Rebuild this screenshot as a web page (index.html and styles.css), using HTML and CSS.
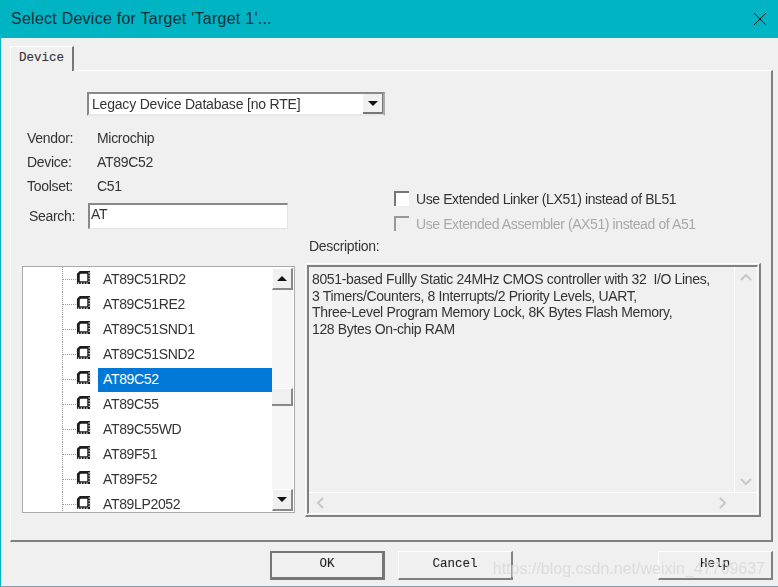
FILE: index.html
```html
<!DOCTYPE html>
<html lang="en">
<head>
  <meta charset="UTF-8" />
  <meta name="viewport" content="width=device-width, initial-scale=1" />
  <title>Select Device</title>
  <link rel="stylesheet" href="styles.css">
</head>
<body>

  <svg class="defs" width="0" height="0" aria-hidden="true">
    <symbol id="chip" viewBox="0 0 16 16">
      <path d="M4 1H15V15H1V4Z" fill="#1c1c1c"/>
      <path d="M5 4H12V12H4V5Z" fill="#fff"/>
      <path d="M2 14h1.4M5 14h1.4M8 14h1.4M11 14h1.4M14 2.5v1.4M14 5.5v1.4M14 8.5v1.4M14 11.5v1.4" stroke="#fff" stroke-width="1.2"/>
    </symbol>
  </svg>

  <div class="window">
    <header class="titlebar">
      <span>Select Device for Target 'Target 1'...</span>
      <svg class="close" width="14" height="14" viewBox="0 0 14 14"><path d="M1 1L13 13M13 1L1 13" stroke="#111" stroke-width="1"/></svg>
    </header>

    <main class="content">
      <div class="tabstrip"><div class="tab">Device</div></div>

      <section class="panel">
        <div class="combo">
          <span class="combo-text">Legacy Device Database [no RTE]</span>
          <span class="combo-btn"><i class="arrow-down"></i></span>
        </div>

        <div class="middle">
          <div class="info">
            <div class="info-row"><span class="info-label">Vendor:</span><span>Microchip</span></div>
            <div class="info-row"><span class="info-label">Device:</span><span>AT89C52</span></div>
            <div class="info-row"><span class="info-label">Toolset:</span><span>C51</span></div>
            <div class="search-row">
              <span class="search-label">Search:</span>
              <div class="search-input">AT</div>
            </div>
          </div>
          <div class="options">
            <label class="check"><i class="box"></i>Use Extended Linker (LX51) instead of BL51</label>
            <label class="check disabled"><i class="box"></i>Use Extended Assembler (AX51) instead of A51</label>
            <div class="desc-label">Description:</div>
          </div>
        </div>

        <div class="lower">
          <div class="device-list">
            <ul class="tree">
              <li class="tree-row"><svg class="chip"><use href="#chip"/></svg><span class="tree-text">AT89C51RD2</span></li>
              <li class="tree-row"><svg class="chip"><use href="#chip"/></svg><span class="tree-text">AT89C51RE2</span></li>
              <li class="tree-row"><svg class="chip"><use href="#chip"/></svg><span class="tree-text">AT89C51SND1</span></li>
              <li class="tree-row"><svg class="chip"><use href="#chip"/></svg><span class="tree-text">AT89C51SND2</span></li>
              <li class="tree-row selected"><svg class="chip"><use href="#chip"/></svg><span class="tree-text">AT89C52</span></li>
              <li class="tree-row"><svg class="chip"><use href="#chip"/></svg><span class="tree-text">AT89C55</span></li>
              <li class="tree-row"><svg class="chip"><use href="#chip"/></svg><span class="tree-text">AT89C55WD</span></li>
              <li class="tree-row"><svg class="chip"><use href="#chip"/></svg><span class="tree-text">AT89F51</span></li>
              <li class="tree-row"><svg class="chip"><use href="#chip"/></svg><span class="tree-text">AT89F52</span></li>
              <li class="tree-row"><svg class="chip"><use href="#chip"/></svg><span class="tree-text">AT89LP2052</span></li>
            </ul>
            <div class="scrollbar">
              <span class="scroll-btn"><i class="arrow-up"></i></span>
              <div class="scroll-track"><div class="scroll-thumb"></div></div>
              <span class="scroll-btn"><i class="arrow-down"></i></span>
            </div>
          </div>

          <div class="description">
            <div class="desc-inner">
              <div class="desc-main">
                <p class="desc-text">8051-based Fullly Static 24MHz CMOS controller with 32  I/O Lines,<br>3 Timers/Counters, 8 Interrupts/2 Priority Levels, UART,<br>Three-Level Program Memory Lock, 8K Bytes Flash Memory,<br>128 Bytes On-chip RAM</p>
                <div class="desc-vscroll">
                  <svg width="12" height="8" viewBox="0 0 12 8"><path d="M1 7L6 2L11 7" fill="none" stroke="#c8c8c8" stroke-width="2"/></svg>
                  <svg width="12" height="8" viewBox="0 0 12 8"><path d="M1 1L6 6L11 1" fill="none" stroke="#c8c8c8" stroke-width="2"/></svg>
                </div>
              </div>
              <div class="desc-hscroll">
                <svg width="8" height="12" viewBox="0 0 8 12"><path d="M7 1L2 6L7 11" fill="none" stroke="#c8c8c8" stroke-width="2"/></svg>
                <svg width="8" height="12" viewBox="0 0 8 12"><path d="M1 1L6 6L1 11" fill="none" stroke="#c8c8c8" stroke-width="2"/></svg>
              </div>
            </div>
          </div>
        </div>
      </section>

      <footer class="buttons">
        <button class="btn default" type="button">OK</button>
        <button class="btn" type="button">Cancel</button>
        <button class="btn help" type="button">Help</button>
      </footer>
    </main>

    <div class="watermark">https://blog.csdn.net/weixin_47709637</div>
  </div>

</body>
</html>
```

FILE: styles.css
```css
/* Old Win32 dialog look */
* {
  box-sizing: border-box;
}

html, body {
  margin: 0;
  height: 100%;
}

body {
  background: #f0f0f0;
  font-family: 'Liberation Sans', Arial, sans-serif;
  font-size: 14px;
  letter-spacing: -0.3px;
  color: #333;
  overflow: hidden;
}

.defs {
  position: absolute;
}

.window {
  position: relative;
  width: 778px;
  height: 587px;
  display: flex;
  flex-direction: column;
  border-left: 1px solid #00b4c4;
  border-bottom: 1px solid #8a9aa0;
  filter: blur(0.35px);
}

.titlebar {
  height: 38px;
  flex: none;
  margin-left: -1px;
  padding: 0 11px 0 11px;
  background: #00b4c4;
  color: #10303a;
  font-size: 16px;
  letter-spacing: 0.25px;
  display: flex;
  align-items: center;
  justify-content: space-between;
}

.content {
  flex: 1;
  padding: 8px 5px 0 9px;
  display: flex;
  flex-direction: column;
}

/* tab */
.tabstrip {
  height: 24px;
  flex: none;
  display: flex;
}

.tab {
  width: 64px;
  height: 25px;
  padding: 4px 0 0 8px;
  font-family: 'Liberation Mono', monospace;
  font-size: 12.5px;
  letter-spacing: 0;
  -webkit-text-stroke: 0.1px #333;
  color: #333;
  background: #f0f0f0;
  border-top: 1px solid #fff;
  border-left: 1px solid #fff;
  border-right: 2px solid #777;
  position: relative;
  z-index: 1;
}

.panel {
  height: 472px;
  flex: none;
  padding-top: 21px;
  border-top: 1px solid #fff;
  border-left: 1px solid #fff;
  border-right: 2px solid #808080;
  border-bottom: 2px solid #808080;
}

/* combo */
.combo {
  width: 298px;
  height: 24px;
  margin-left: 76px;
  display: flex;
  align-items: center;
  justify-content: space-between;
  background: #fff;
  border: 2px solid #888;
  border-right-color: #aaa;
  border-bottom-color: #e8e8e8;
}

.combo-text {
  padding-left: 3px;
  letter-spacing: -0.2px;
}

.combo-btn {
  width: 20px;
  height: 20px;
  display: flex;
  align-items: center;
  justify-content: center;
  background: #f0f0f0;
  border-right: 1px solid #777;
  border-bottom: 2px solid #777;
}

.arrow-down, .arrow-up {
  display: block;
  width: 0;
  height: 0;
  border-left: 5px solid transparent;
  border-right: 5px solid transparent;
}

.arrow-down {
  border-top: 5px solid #111;
}

.arrow-up {
  border-bottom: 5px solid #111;
}

/* middle part */
.middle {
  height: 148px;
  display: flex;
}

.info {
  width: 277px;
  padding: 10px 0 0 16px;
  flex: none;
}

.info-row {
  height: 24px;
  display: flex;
  align-items: center;
}

.info-label {
  width: 70px;
}

.search-row {
  height: 26px;
  margin-top: 5px;
  display: flex;
  align-items: center;
}

.search-label {
  width: 61px;
  padding-left: 2px;
}

.search-input {
  width: 200px;
  height: 26px;
  padding-left: 1px;
  line-height: 18px;
  background: #fff;
  border-top: 2px solid #888;
  border-left: 2px solid #888;
  border-right: 1px solid #e4e4e4;
  border-bottom: 1px solid #e4e4e4;
}

.options {
  padding: 70px 0 0 106px;
  flex: 1;
}

.check {
  height: 25px;
  display: flex;
  align-items: center;
  gap: 7px;
  letter-spacing: -0.4px;
  color: #333;
}

.box {
  width: 15px;
  height: 15px;
  background: #fff;
  border-top: 2px solid #777;
  border-left: 2px solid #777;
}

.check.disabled {
  color: #a8a8a8;
}

.check.disabled .box {
  background: #f0f0f0;
  border-color: #999;
}

.desc-label {
  margin: 2px 0 0 -85px;
}

/* lists */
.lower {
  display: flex;
  align-items: flex-start;
  gap: 10px;
  padding-left: 11px;
}

.device-list {
  width: 273px;
  height: 247px;
  margin-top: 2px;
  display: flex;
  background: #fff;
  border: 1px solid #aaa;
}

.tree {
  flex: 1;
  margin: 0;
  padding: 0;
  list-style: none;
  overflow: hidden;
  background: #fff;
}

.tree-row {
  position: relative;
  height: 25px;
  padding-left: 53px;
  display: flex;
  align-items: center;
  letter-spacing: -0.35px;
}

.tree-row::before {
  content: "";
  position: absolute;
  left: 39px;
  top: 0;
  bottom: 0;
  border-left: 1px dotted #999;
}

.tree-row::after {
  content: "";
  position: absolute;
  left: 40px;
  top: 12px;
  width: 13px;
  border-top: 1px dotted #999;
}

.chip {
  width: 15px;
  height: 15px;
  margin-top: -5px;
  flex: none;
}

.tree-text {
  flex: 1;
  height: 24px;
  margin: 1px 0 0 7px;
  padding-left: 5px;
  line-height: 22px;
  color: #333;
}

.selected .tree-text {
  background: #0078d7;
  color: #fff;
}

.scrollbar {
  width: 21px;
  flex: none;
  padding: 1px 0;
  display: flex;
  flex-direction: column;
  margin-right: 1px;
}

.scroll-btn {
  height: 22px;
  flex: none;
  display: flex;
  align-items: center;
  justify-content: center;
  background: #f0f0f0;
  border-top: 1px solid #fff;
  border-left: 1px solid #fff;
  border-right: 2px solid #888;
  border-bottom: 2px solid #888;
}

.scroll-track {
  flex: 1;
  background: #f6f6f6;
  padding-top: 98px;
}

.scroll-thumb {
  height: 18px;
  background: #f0f0f0;
  border-top: 1px solid #fff;
  border-right: 2px solid #888;
  border-bottom: 2px solid #888;
}

.description {
  width: 456px;
  height: 254px;
  margin-top: -1px;
  padding: 1px;
  background: #f0f0f0;
  border-top: 1px solid #fff;
  border-left: 1px solid #fff;
  border-right: 2px solid #808080;
  border-bottom: 2px solid #808080;
}

.desc-inner {
  height: 100%;
  display: flex;
  flex-direction: column;
  border-top: 2px solid #808080;
  border-left: 2px solid #808080;
  border-right: 1px solid #fff;
  border-bottom: 1px solid #fff;
}

.desc-main {
  flex: 1;
  display: flex;
  border-bottom: 1px solid #fff;
}

.desc-text {
  flex: 1;
  margin: 0;
  padding: 4px 0 0 3px;
  line-height: 16.5px;
  letter-spacing: -0.35px;
  white-space: pre-wrap;
  border-right: 1px solid #fff;
}

.desc-vscroll {
  width: 22px;
  padding: 6px 0 6px;
  display: flex;
  flex-direction: column;
  align-items: center;
  justify-content: space-between;
}

.desc-hscroll {
  height: 20px;
  padding: 0 30px 0 7px;
  display: flex;
  align-items: center;
  justify-content: space-between;
}

/* bottom buttons */
.buttons {
  flex: 1;
  padding-top: 9px;
  display: flex;
  align-items: flex-start;
  gap: 13px;
  padding-left: 260px;
}

.btn {
  width: 115px;
  height: 29px;
  padding: 0 0 2px;
  font-family: 'Liberation Mono', monospace;
  font-size: 12.5px;
  -webkit-text-stroke: 0.1px #222;
  color: #222;
  background: #f0f0f0;
  border-top: 1px solid #fff;
  border-left: 1px solid #fff;
  border-right: 2px solid #808080;
  border-bottom: 2px solid #808080;
}

.btn.default {
  border: 2px solid #777;
  border-right-width: 3px;
  border-bottom-width: 3px;
}

.btn.help {
  margin-left: auto;
}

.watermark {
  position: absolute;
  right: 13px;
  bottom: 8px;
  font-size: 16px;
  letter-spacing: 0;
  color: rgba(215, 215, 215, 0.8);
  white-space: nowrap;
}
```
